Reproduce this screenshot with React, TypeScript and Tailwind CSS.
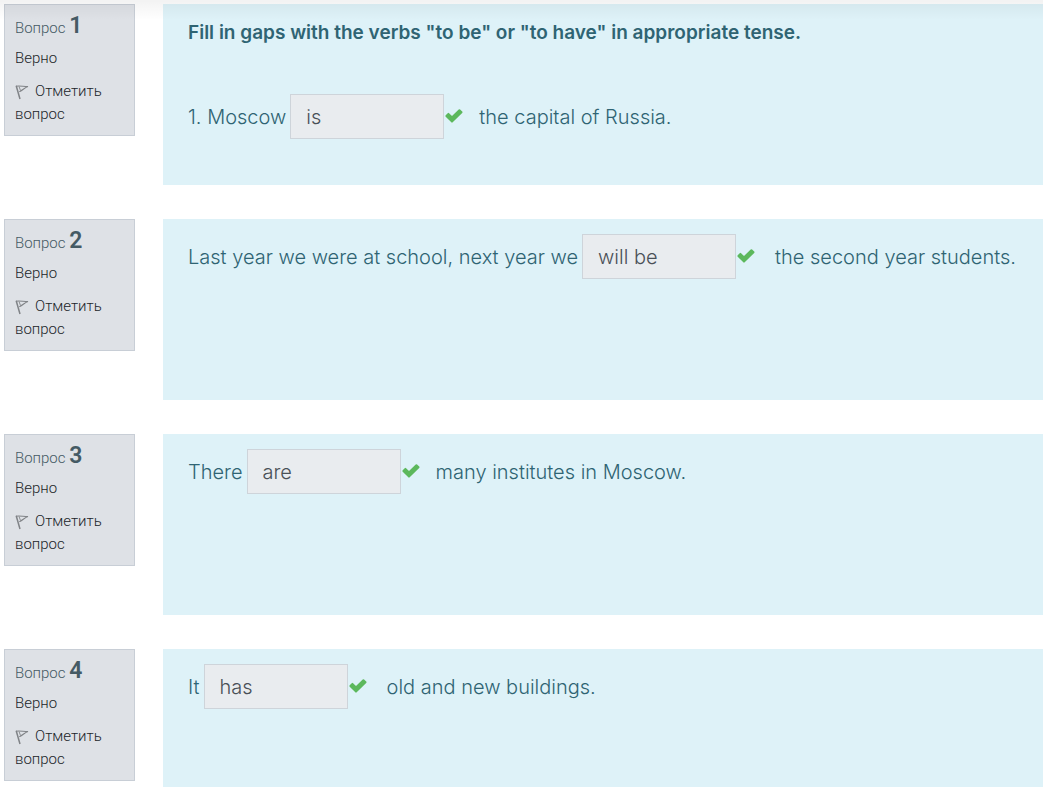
type Question = {
  number: number;
  heading?: string;
  before: string;
  answer: string;
  after: string;
  inputClass: string;
  afterClass: string;
};

const questions: Question[] = [
  {
    number: 1,
    heading: 'Fill in gaps with the verbs "to be" or "to have" in appropriate tense.',
    before: "1. Moscow",
    answer: "is",
    after: "the capital of Russia.",
    inputClass: "w-[154px]",
    afterClass: "ml-4",
  },
  {
    number: 2,
    before: "Last year we were at school, next year we",
    answer: "will be",
    after: "the second year students.",
    inputClass: "w-[154px]",
    afterClass: "ml-5",
  },
  {
    number: 3,
    before: "There",
    answer: "are",
    after: "many institutes in Moscow.",
    inputClass: "w-[154px]",
    afterClass: "ml-4",
  },
  {
    number: 4,
    before: "It",
    answer: "has",
    after: "old and new buildings.",
    inputClass: "w-36",
    afterClass: "ml-5",
  },
];

function FlagIcon() {
  return (
    <svg className="mr-1.5 inline-block h-4 w-3.5 align-[-4px]" viewBox="0 0 14 16" fill="none" stroke="#808387" aria-hidden="true">
      <path d="M1.2 1.8 5 15" strokeWidth="1.5" />
      <path d="M1 2.200c3.500-.5 7.500.3 12 .3-3.100.9-4.700 3.300-8.700 5.300" strokeWidth="1.100" />
      <path d="M4 2.500 5.500 6.500" strokeWidth=".9" />
    </svg>
  );
}

function CheckIcon() {
  return (
    <svg className="mb-0.5 ml-px h-3.5 w-[18px] shrink-0" viewBox="0 0 18 14" role="img" aria-label="Верно">
      <path d="M.7 6.200 2.700 4.200q.7-.7 1.400 0L7 7l6.700-6.400q.7-.7 1.400 0l2.100 2q.7.7 0 1.400L7.700 13.300q-.7.700-1.400 0L.7 7.700q-.7-.7 0-1.500Z" fill="#5cb85c" />
    </svg>
  );
}

function QuestionInfo({ number }: { number: number }) {
  return (
    <aside className="w-[131px] shrink-0 self-start border border-[#c8ced6] bg-[#dee1e6] px-2.5 pt-2 pb-[9px] font-['Roboto',sans-serif] text-[15px] leading-[23px] font-light text-[#212529]">
      <h3 className="leading-[26px] text-[#455a64]">
        Вопрос <span className="text-[23px] leading-[26px] font-semibold">{number}</span>
      </h3>
      <div className="mt-1.5">Верно</div>
      <a href="#flag" className="mt-2.5 block">
        <FlagIcon />
        Отметить вопрос
      </a>
    </aside>
  );
}

function QuestionRow({ question }: { question: Question }) {
  const id = `answer-${question.number}`;
  return (
    <section className="group flex gap-7">
      <QuestionInfo number={question.number} />
      <div className="min-h-[181px] min-w-0 flex-1 bg-[#def2f8] px-[25px] pt-[15px] text-[20px] leading-7 font-light text-[#2f6473] group-last:min-h-[139px]">
        {question.heading && <p className="mb-[47px] text-[19px] leading-7 font-semibold">{question.heading}</p>}
        <div className="flex items-center whitespace-nowrap">
          <label htmlFor={id}>{question.before}</label>
          <input
            id={id}
            type="text"
            readOnly
            defaultValue={question.answer}
            className={`ml-1 h-[45px] shrink-0 border border-[#ced4da] bg-[#e9ecef] px-[15px] text-[#495057] outline-none ${question.inputClass}`}
          />
          <CheckIcon />
          <span className={question.afterClass}>{question.after}</span>
        </div>
      </div>
    </section>
  );
}

export default function App() {
  return (
    <main className="relative flex flex-col gap-[34px] bg-white pt-1 pl-1 font-['Inter',sans-serif]">
      <div className="pointer-events-none absolute inset-x-0 top-0 h-5 bg-gradient-to-b from-black/5 to-transparent" />
      {questions.map((question) => (
        <QuestionRow key={question.number} question={question} />
      ))}
    </main>
  );
}
